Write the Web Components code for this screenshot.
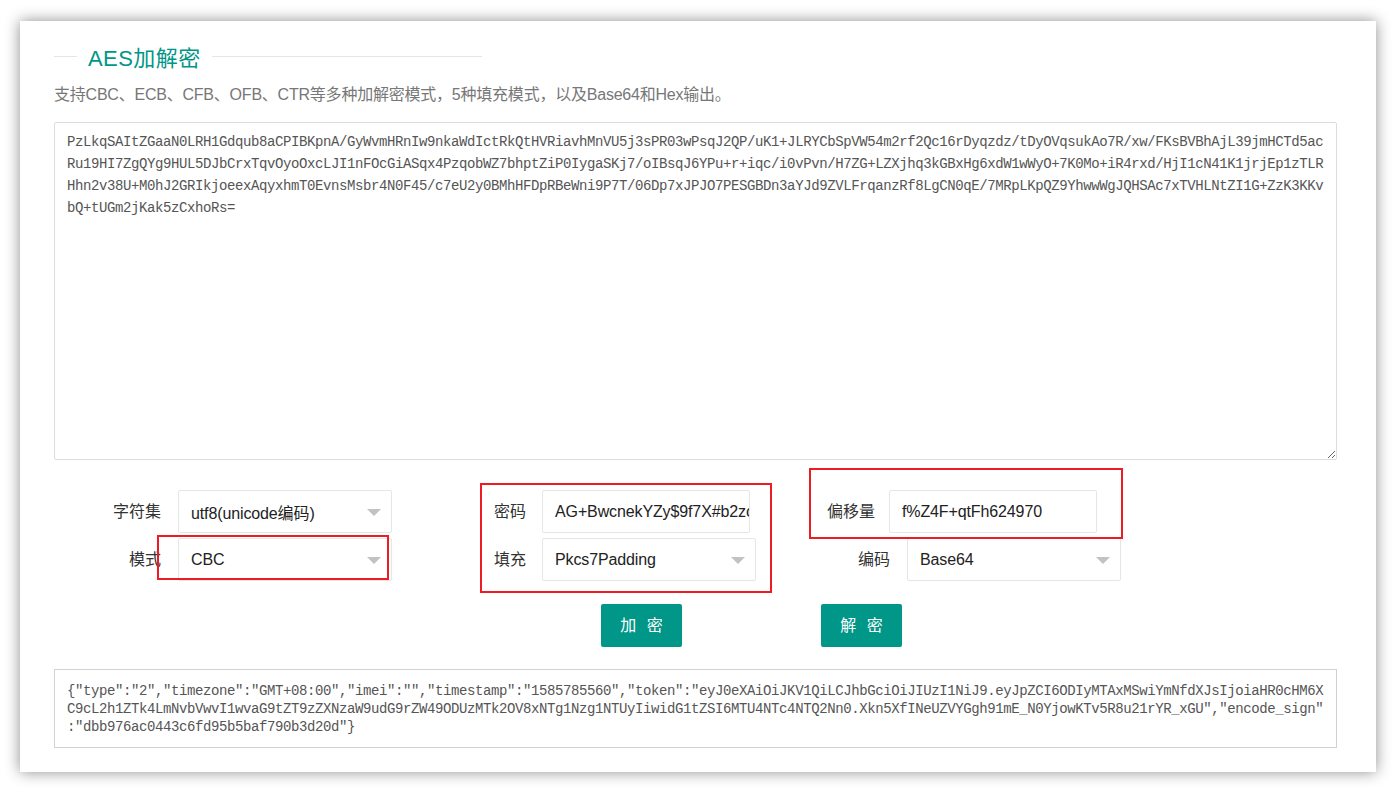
<!DOCTYPE html>
<html lang="zh">
<head>
<meta charset="utf-8">
<title>AES加解密</title>
<style>
  html, body { margin: 0; background: #fff; }
  body {
    font-family: "Liberation Sans", "Noto Sans CJK SC", sans-serif;
    color: #333;
  }
</style>
</head>
<body>
<aes-card>
  <aes-title>AES加解密</aes-title>
  <aes-desc>支持CBC、ECB、CFB、OFB、CTR等多种加解密模式，5种填充模式，以及Base64和Hex输出。</aes-desc>
  <code-box resizable>PzLkqSAItZGaaN0LRH1Gdqub8aCPIBKpnA/GyWvmHRnIw9nkaWdIctRkQtHVRiavhMnVU5j3sPR03wPsqJ2QP/uK1+JLRYCbSpVW54m2rf2Qc16rDyqzdz/tDyOVqsukAo7R/xw/FKsBVBhAjL39jmHCTd5ac
Ru19HI7ZgQYg9HUL5DJbCrxTqvOyoOxcLJI1nFOcGiASqx4PzqobWZ7bhptZiP0IygaSKj7/oIBsqJ6YPu+r+iqc/i0vPvn/H7ZG+LZXjhq3kGBxHg6xdW1wWyO+7K0Mo+iR4rxd/HjI1cN41K1jrjEp1zTLR
Hhn2v38U+M0hJ2GRIkjoeexAqyxhmT0EvnsMsbr4N0F45/c7eU2y0BMhHFDpRBeWni9P7T/06Dp7xJPJO7PESGBDn3aYJd9ZVLFrqanzRf8LgCN0qE/7MRpLKpQZ9YhwwWgJQHSAc7xTVHLNtZI1G+ZzK3KKv
bQ+tUGm2jKak5zCxhoRs=</code-box>
  <aes-form>
    <form-col style="--col-left:0">
      <form-field label="字符集" style="--label-w:107px;--gap:17px"><aes-select>utf8(unicode编码)</aes-select></form-field>
      <form-field label="模式" style="--label-w:107px;--gap:17px"><aes-select>CBC</aes-select></form-field>
    </form-col>
    <form-col style="--col-left:88px">
      <form-field label="密码" style="--label-w:46px;--gap:16px"><aes-input>AG+BwcnekYZy$9f7X#b2zc</aes-input></form-field>
      <form-field label="填充" style="--label-w:46px;--gap:16px"><aes-select>Pkcs7Padding</aes-select></form-field>
    </form-col>
    <form-col style="--col-left:54px">
      <form-field label="偏移量" style="--label-w:65px;--gap:14px"><aes-input>f%Z4F+qtFh624970</aes-input></form-field>
      <form-field label="编码" style="--label-w:80px;--gap:17px"><aes-select>Base64</aes-select></form-field>
    </form-col>
    <mark-box style="left:103px;top:45px;width:232px;height:45px"></mark-box>
    <mark-box style="left:426px;top:-7px;width:292px;height:110px"></mark-box>
    <mark-box style="left:755px;top:-22px;width:314px;height:71px"></mark-box>
  </aes-form>
  <button-row>
    <aes-button>加 密</aes-button>
    <aes-button>解 密</aes-button>
  </button-row>
  <code-box result>{"type":"2","timezone":"GMT+08:00","imei":"","timestamp":"1585785560","token":"eyJ0eXAiOiJKV1QiLCJhbGciOiJIUzI1NiJ9.eyJpZCI6ODIyMTAxMSwiYmNfdXJsIjoiaHR0cHM6X
C9cL2h1ZTk4LmNvbVwvI1wvaG9tZT9zZXNzaW9udG9rZW49ODUzMTk2OV8xNTg1Nzg1NTUyIiwidG1tZSI6MTU4NTc4NTQ2Nn0.Xkn5XfINeUZVYGgh91mE_N0YjowKTv5R8u21rYR_xGU","encode_sign"
:"dbb976ac0443c6fd95b5baf790b3d20d"}</code-box>
</aes-card>

<script>
// helper: every element below is just a style block plus a slot
function simpleElement(tag, css, markup) {
  customElements.define(tag, class extends HTMLElement {
    constructor() {
      super()
      this.attachShadow({ mode: "open" })
      this.shadowRoot.innerHTML = `<style>${css}</style>${markup || "<slot></slot>"}`
    }
  })
}

simpleElement("aes-card", `
  :host {
    display: block;
    box-sizing: border-box;
    height: 751px;
    margin: 21px 20px 20px;
    padding: 19px 39px 24px 34px;
    background: #fff;
    box-shadow: 0 0 14px rgba(0, 0, 0, .45);
  }
`)

simpleElement("aes-title", `
  :host {
    display: flex;
    align-items: center;
    width: 428px;
    height: 32px;
    font-size: 22px;
    letter-spacing: .45px;
    color: #009688;
  }
  .line { height: 1px; background: #e6e6e6; margin-top: 1px; }
  .left { width: 23px; margin-right: 11px; }
  .right { flex: 1; margin-left: 11px; }
`, `<span class="line left"></span><slot></slot><span class="line right"></span>`)

simpleElement("aes-desc", `
  :host {
    display: block;
    margin: 12px 0 16px;
    font-size: 16px;
    letter-spacing: -.22px;
    line-height: 22px;
    color: #777;
  }
`)

simpleElement("code-box", `
  :host {
    display: block;
    box-sizing: border-box;
    border: 1px solid #ddd;
    border-radius: 2px;
    padding: 8px 12px;
    height: 338px;
    font-family: "Liberation Mono", monospace;
    font-size: 14px;
    letter-spacing: -.4px;
    line-height: 22px;
    color: #555;
    white-space: pre;
    overflow: auto;
    resize: vertical;
  }
  :host([result]) {
    height: 79px;
    margin-top: 22px;
    padding: 12px 12px;
    line-height: 18px;
    border-color: #d2d2d2;
    border-radius: 0;
    resize: none;
    overflow: hidden;
  }
`)

simpleElement("aes-form", `
  :host {
    display: flex;
    position: relative;
    margin-top: 30px;
  }
`)

simpleElement("form-col", `
  :host {
    display: flex;
    flex-direction: column;
    gap: 5px;
    margin-left: var(--col-left);
  }
`)

class FormField extends HTMLElement {
  constructor() {
    super()
    this.attachShadow({ mode: "open" })
    this.shadowRoot.innerHTML = `
      <style>
        :host {
          display: flex;
          align-items: center;
          height: 43px;
          font-size: 16px;
          color: #333;
        }
        .label {
          width: var(--label-w);
          margin-right: var(--gap);
          padding-bottom: 4px;
          text-align: right;
        }
      </style>
      <span class="label"></span>
      <slot></slot>
    `
    this.shadowRoot.querySelector(".label").textContent = this.getAttribute("label")
  }
}
customElements.define("form-field", FormField)

const boxCss = `
  display: flex;
  align-items: center;
  box-sizing: border-box;
  height: 43px;
  border: 1px solid #e6e6e6;
  border-radius: 2px;
  background: #fff;
  padding-left: 12px;
  font-size: 16px;
  letter-spacing: -.12px;
  color: #222;
  white-space: nowrap;
  overflow: hidden;
`

simpleElement("aes-select", `
  :host { ${boxCss} width: 214px; position: relative; }
  .arrow {
    position: absolute;
    right: 10px;
    top: 18px;
    width: 0;
    height: 0;
    border-left: 7px solid transparent;
    border-right: 7px solid transparent;
    border-top: 7px solid #c2c2c2;
  }
`, `<slot></slot><span class="arrow"></span>`)

simpleElement("aes-input", `
  :host { ${boxCss} width: 208px; }
`)

simpleElement("mark-box", `
  :host {
    position: absolute;
    box-sizing: border-box;
    border: 2px solid #ed1c24;
    pointer-events: none;
  }
`, " ")

simpleElement("button-row", `
  :host {
    display: flex;
    gap: 139px;
    margin-top: 23px;
    padding-left: 547px;
  }
`)

simpleElement("aes-button", `
  :host {
    display: flex;
    align-items: center;
    justify-content: center;
    box-sizing: border-box;
    width: 81px;
    height: 43px;
    padding: 0 0 4px 3px;
    background: #009688;
    border-radius: 2px;
    color: #fff;
    font-size: 16px;
    letter-spacing: 3px;
  }
`)
</script>
</body>
</html>
